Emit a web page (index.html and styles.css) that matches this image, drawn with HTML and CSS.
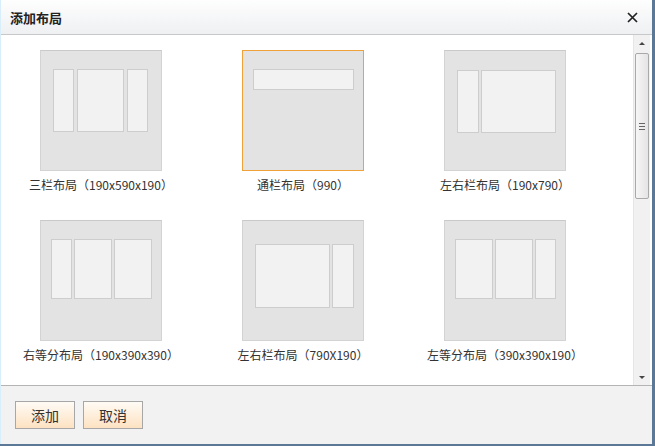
FILE: index.html
```html
<!DOCTYPE html>
<html lang="zh-CN">
<head>
  <meta charset="utf-8">
  <title>添加布局</title>
  <link rel="stylesheet" href="styles.css">
</head>
<body>
  <div class="dialog">
    <!-- En-tête -->
    <div class="dialog-head">
      <span class="dialog-title">添加布局</span>
      <span class="dialog-close">
        <svg width="11" height="11" viewBox="0 0 11 11">
          <path d="M1 1 L10 10 M10 1 L1 10" stroke="#222" stroke-width="1.7" fill="none"/>
        </svg>
      </span>
    </div>

    <!-- Liste des gabarits -->
    <div class="dialog-body">
      <div class="layout-list">
        <div class="layout-item">
          <div class="thumb t-three">
            <div class="col c21"></div>
            <div class="col c47"></div>
            <div class="col c21"></div>
          </div>
          <div class="caption">三栏布局（190x590x190）</div>
        </div>
        <div class="layout-item">
          <div class="thumb t-full selected">
            <div class="col bar"></div>
          </div>
          <div class="caption">通栏布局（990）</div>
        </div>
        <div class="layout-item">
          <div class="thumb t-lr">
            <div class="col c22"></div>
            <div class="col c75"></div>
          </div>
          <div class="caption">左右栏布局（190x790）</div>
        </div>
        <div class="layout-item">
          <div class="thumb t-eq">
            <div class="col c21"></div>
            <div class="col c38"></div>
            <div class="col c38"></div>
          </div>
          <div class="caption">右等分布局（190x390x390）</div>
        </div>
        <div class="layout-item">
          <div class="thumb t-rl">
            <div class="col c75"></div>
            <div class="col c22"></div>
          </div>
          <div class="caption">左右栏布局（790X190）</div>
        </div>
        <div class="layout-item">
          <div class="thumb t-eq">
            <div class="col c38"></div>
            <div class="col c38"></div>
            <div class="col c21"></div>
          </div>
          <div class="caption">左等分布局（390x390x190）</div>
        </div>
      </div>

      <!-- Barre de défilement -->
      <div class="scrollbar">
        <div class="sb-arrow"><span class="tri-up"></span></div>
        <div class="sb-track">
          <div class="sb-thumb"><span class="grip"></span></div>
        </div>
        <div class="sb-arrow"><span class="tri-down"></span></div>
      </div>
    </div>

    <!-- Pied -->
    <div class="dialog-foot">
      <button class="btn">添加</button>
      <button class="btn">取消</button>
    </div>
  </div>
</body>
</html>
```

FILE: styles.css
```css
/* Fond derrière la boîte */
body {
  margin: 0;
  padding: 0;
  background-color: #5b7896;
  font-family: "Noto Sans CJK SC", "Liberation Sans", sans-serif;
  color: #333;
}

/* Boîte de dialogue */
.dialog {
  width: 652px;
  height: 444px;
  background: #fff;
  border-left: 1px solid #d9eefb;
  box-sizing: border-box;
  display: flex;
  flex-direction: column;
}

/* En-tête */
.dialog-head {
  height: 34px;
  flex: none;
  display: flex;
  align-items: center;
  justify-content: space-between;
  padding: 0 14px 0 9px;
  background: linear-gradient(#fefefe, #eef0f2);
  border-bottom: 1px solid #c6c8ca;
}
.dialog-title {
  font-size: 13px;
  font-weight: bold;
  color: #222;
}
.dialog-close {
  display: flex;
  margin-top: 1px;
}

/* Corps */
.dialog-body {
  height: 350px;
  flex: none;
  display: flex;
}
.layout-list {
  width: 633px;
  padding-top: 15px;
  margin-left: -1px;
  display: grid;
  grid-template-columns: repeat(3, 202px);
  grid-auto-rows: 143px;
  row-gap: 27px;
  align-content: start;
}
.layout-item {
  display: flex;
  flex-direction: column;
  align-items: center;
}

/* Vignette */
.thumb {
  width: 122px;
  height: 121px;
  box-sizing: border-box;
  background: #e3e3e3;
  border: 1px solid #d3d3d3;
  border-top-color: #c9c9c9;
  display: flex;
  align-items: flex-start;
  gap: 2px;
}
.thumb.selected {
  border-color: #f0a23a;
}
.t-three { padding: 18px 0 0 12px; gap: 3px; }
.t-full  { padding: 18px 0 0 10px; }
.t-lr    { padding: 19px 0 0 12px; }
.t-eq    { padding: 18px 0 0 10px; }
.t-rl    { padding: 23px 0 0 12px; }

.col {
  box-sizing: border-box;
  background: #f2f2f2;
  border: 1px solid #cdcdcd;
  height: 63px;
}
.t-eq .col { height: 60px; }
.t-rl .col { height: 64px; }
.c21 { width: 21px; }
.c22 { width: 22px; }
.c38 { width: 38px; }
.c47 { width: 47px; }
.c75 { width: 75px; }
.bar { width: 101px; height: 21px; }

.caption {
  margin-top: 6px;
  font-size: 12px;
  line-height: 16px;
  color: #333;
  white-space: nowrap;
}

/* Barre de défilement */
.scrollbar {
  width: 16px;
  display: flex;
  flex-direction: column;
  background: #f1f1f1;
  border-left: 1px solid #e6e6e6;
}
.sb-arrow {
  height: 16px;
  flex: none;
  display: flex;
  align-items: center;
  justify-content: center;
}
.tri-up, .tri-down {
  width: 0;
  height: 0;
  border-left: 3px solid transparent;
  border-right: 3px solid transparent;
}
.tri-up { border-bottom: 3px solid #444; }
.tri-down { border-top: 3px solid #444; }
.sb-track {
  flex: 1;
  padding-top: 2px;
}
.sb-thumb {
  width: 14px;
  height: 146px;
  margin-left: 1px;
  box-sizing: border-box;
  border: 1px solid #a9a9a9;
  border-radius: 2px;
  background: linear-gradient(to right, #f6f6f6, #e4e4e4);
  display: flex;
  align-items: center;
  justify-content: center;
}
.grip {
  width: 6px;
  height: 5px;
  border-top: 1px solid #666;
  border-bottom: 1px solid #666;
  background: linear-gradient(#666, #666) center / 6px 1px no-repeat;
}

/* Pied */
.dialog-foot {
  flex: 1;
  background: #f2f2f2;
  border-top: 1px solid #b4b4b4;
  padding: 15px 0 0 14px;
  display: flex;
  align-items: flex-start;
  gap: 8px;
}
.btn {
  width: 60px;
  height: 28px;
  font-family: "Noto Sans CJK SC", sans-serif;
  font-size: 14px;
  color: #333;
  border: 1px solid #a7a7a7;
  background: linear-gradient(#fffbf5, #fde2c2);
  padding: 0;
}
```
